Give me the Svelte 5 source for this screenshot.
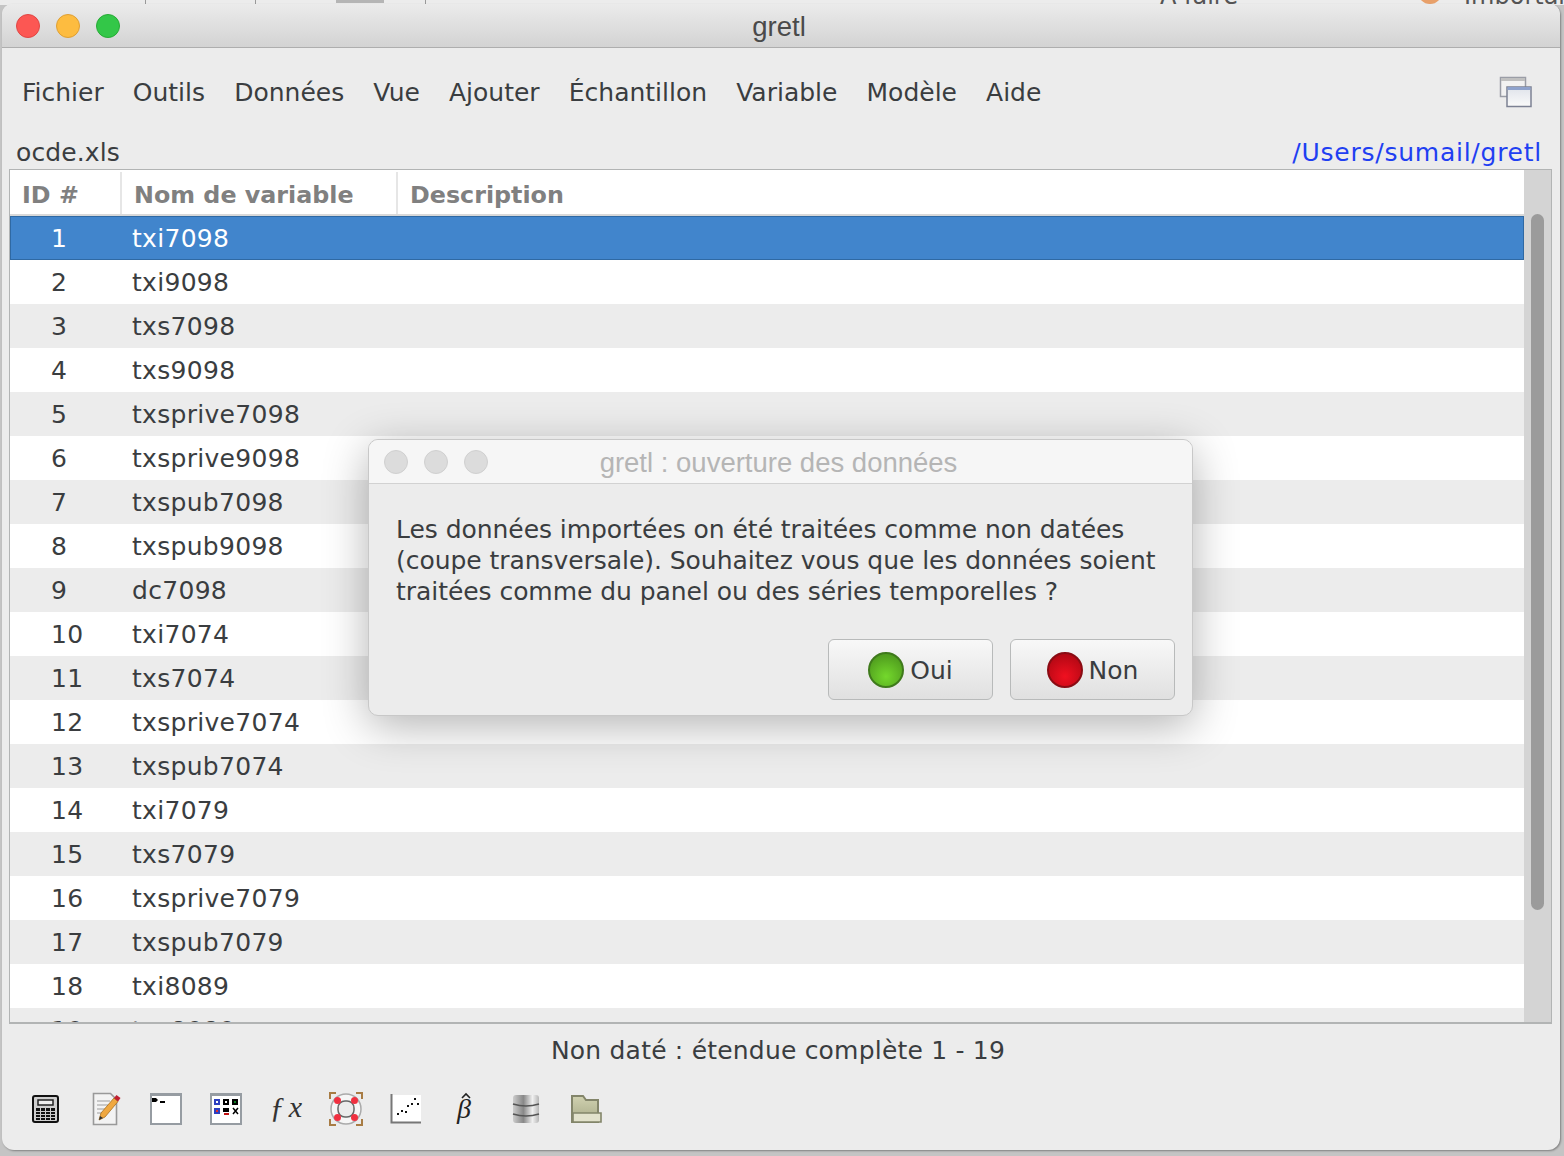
<script lang="ts">
  const menus = ["Fichier", "Outils", "Données", "Vue", "Ajouter", "Échantillon", "Variable", "Modèle", "Aide"];
  const names = [
    "txi7098", "txi9098", "txs7098", "txs9098", "txsprive7098", "txsprive9098", "txspub7098",
    "txspub9098", "dc7098", "txi7074", "txs7074", "txsprive7074", "txspub7074", "txi7079",
    "txs7079", "txsprive7079", "txspub7079", "txi8089", "txs8089"
  ];
</script>

<div class="desk">
  <div class="behind">
    <span class="tick" style="left: 145px"></span>
    <span class="tick" style="left: 255px"></span>
    <span class="tab" style="left: 336px"></span>
    <span class="tick" style="left: 425px"></span>
    <span class="peek" style="left: 1160px">À faire</span>
    <span class="dot" style="left: 1418px"></span>
    <span class="peek" style="left: 1464px">Important</span>
  </div>

  <div class="window">
    <header class="titlebar">
      <div class="lights">
        <span class="light red"></span>
        <span class="light yellow"></span>
        <span class="light green"></span>
      </div>
      <span class="title">gretl</span>
    </header>

    <nav class="menubar">
      {#each menus as m}
        <span>{m}</span>
      {/each}
      <svg class="winicon" width="34" height="32" viewBox="0 0 34 32">
        <defs>
          <linearGradient id="pane" x1="0" y1="0" x2="0" y2="1">
            <stop offset="0" stop-color="#dfe3ea" />
            <stop offset="1" stop-color="#fafafa" />
          </linearGradient>
        </defs>
        <rect x="1.5" y="1.5" width="25" height="19" fill="#f2f2f2" stroke="#9a9da6" stroke-width="1.5" />
        <rect x="2" y="2" width="24" height="3" fill="#c0c0c0" />
        <rect x="8" y="11" width="24" height="19.5" fill="url(#pane)" stroke="#7c8193" stroke-width="1.5" />
        <rect x="8.5" y="11" width="23" height="3" fill="#8ea2cc" />
      </svg>
    </nav>

    <div class="infobar">
      <span class="file">ocde.xls</span>
      <span class="path">/Users/sumail/gretl</span>
    </div>

    <div class="tablebox">
      <div class="table">
        <div class="thead">
          <div class="th c1">ID #</div>
          <div class="th c2">Nom de variable</div>
          <div class="th c3">Description</div>
        </div>
        {#each names as name, i}
          <div class="row" class:alt={i % 2 === 0} class:selected={i === 0}>
            <div class="id">{i + 1}</div>
            <div class="name">{name}</div>
          </div>
        {/each}
      </div>
      <div class="scrollbar"><div class="thumb"></div></div>
    </div>

    <div class="status">Non daté : étendue complète 1 - 19</div>

    <div class="toolbar">
      <span class="tool">
        <svg width="32" height="30" viewBox="0 0 32 30">
          <rect x="3" y="2" width="25" height="26" rx="2" fill="#cfcfcf" stroke="#111" stroke-width="2" />
          <rect x="8" y="6" width="15" height="5" fill="#eee" stroke="#222" stroke-width="1.5" />
          <g fill="#111">
            {#each [6, 11, 16, 21] as x}
              <rect {x} y="14" width="4" height="12" />
            {/each}
          </g>
          <path d="M5 17.500h22M5 20.500h22M5 23.500h22" stroke="#ccc" stroke-width="1" />
        </svg>
      </span>
      <span class="tool">
        <svg width="32" height="34" viewBox="0 0 32 34">
          <path d="M3.500 1.500h17l6 6v25h-23z" fill="#f3f3f3" stroke="#999" stroke-width="1.6" />
          <path d="M7 9h13M7 13h11M7 17h9M7 21h7" stroke="#bbb" stroke-width="1.6" />
          <path d="M9 28l2-7L24 6l4 3.500L15 25z" fill="#f0a840" stroke="#a87020" stroke-width="0.8" />
          <path d="M9 28l1-4 3 2z" fill="#333" />
          <path d="M24 6l2.500-3 4 3-2.500 3.500z" fill="#c02030" />
        </svg>
      </span>
      <span class="tool">
        <svg width="32" height="32" viewBox="0 0 32 32">
          <rect x="1" y="1" width="30" height="30" fill="#fff" stroke="#969ca2" stroke-width="2" />
          <rect x="0" y="0" width="32" height="3" fill="#969ca2" />
          <path d="M2 5h4l2 2-2 2H2zM10 8h5v2h-5z" fill="#000" />
        </svg>
      </span>
      <span class="tool">
        <svg width="32" height="32" viewBox="0 0 32 32">
          <rect x="1" y="1" width="30" height="30" fill="#fff" stroke="#969ca2" stroke-width="2" />
          <rect x="0" y="0" width="32" height="3" fill="#969ca2" />
          <rect x="5" y="7" width="4" height="4" fill="#fff" stroke="#2c3fc0" stroke-width="2" />
          <rect x="14" y="7" width="4" height="4" fill="#fff" stroke="#000" stroke-width="2" />
          <rect x="23" y="7" width="4" height="4" fill="#0b7a20" stroke="#000" stroke-width="2" />
          <rect x="4" y="15" width="6" height="6" fill="#2c3fc0" />
          <rect x="6" y="17" width="2" height="2" fill="#e03030" />
          <path d="M13 15h6v4h-6z" fill="#000" />
          <path d="M14 20h5v2h-5z" fill="#c01010" />
          <path d="M23 15l5 6M28 15l-5 6" stroke="#000" stroke-width="1.500" />
        </svg>
      </span>
      <span class="tool fx"><i>ƒ</i> <i>x</i></span>
      <span class="tool">
        <svg width="34" height="34" viewBox="0 0 34 34">
          <path d="M1 7V1h6M27 1h6v6M33 27v6h-6M7 33H1v-6" fill="none" stroke="#a87c44" stroke-width="2" />
          <circle cx="17" cy="17" r="15" fill="#f6f6f6" stroke="#aaa" stroke-width="1.500" />
          <rect x="9" y="9" width="16" height="16" rx="7" fill="#ececec" stroke="#666" stroke-width="1.500" />
          <g fill="#f03040">
            <circle cx="8.500" cy="8.500" r="3.500" />
            <circle cx="25.500" cy="8.500" r="3.500" />
            <circle cx="8.500" cy="25.500" r="3.500" />
            <circle cx="25.500" cy="25.500" r="3.500" />
          </g>
        </svg>
      </span>
      <span class="tool">
        <svg width="32" height="30" viewBox="0 0 32 30">
          <rect x="1" y="1" width="30" height="28" fill="#fff" />
          <path d="M1.500 0v28.500H31" fill="none" stroke="#777" stroke-width="2" />
          <g fill="#111">
            <rect x="7" y="19" width="2" height="2" /><rect x="11" y="16" width="2" height="2" />
            <rect x="15" y="17" width="2" height="2" /><rect x="17" y="11" width="2" height="2" />
            <rect x="21" y="9" width="2" height="2" /><rect x="24" y="4" width="2" height="2" />
            <rect x="27" y="9" width="2" height="2" />
          </g>
        </svg>
      </span>
      <span class="tool beta">
        <svg class="hat" width="10" height="7" viewBox="0 0 10 7">
          <path d="M1 6l4-4 4 4" fill="none" stroke="#222" stroke-width="1.600" />
        </svg>
        β
      </span>
      <span class="tool">
        <svg width="28" height="30" viewBox="0 0 28 30">
          <defs>
            <linearGradient id="can" x1="0" y1="0" x2="1" y2="0">
              <stop offset="0" stop-color="#ccc" />
              <stop offset="0.400" stop-color="#888" />
              <stop offset="0.750" stop-color="#f0f0f0" />
              <stop offset="1" stop-color="#b5b5b5" />
            </linearGradient>
          </defs>
          <rect x="1" y="1" width="26" height="28" rx="3" fill="url(#can)" />
          <path d="M1 10q13 4 26 0M1 20q13 4 26 0" stroke="#555" stroke-width="1.600" fill="none" />
        </svg>
      </span>
      <span class="tool">
        <svg width="32" height="30" viewBox="0 0 32 30">
          <defs>
            <linearGradient id="folder" x1="0" y1="0" x2="0" y2="1">
              <stop offset="0" stop-color="#d0d1b0" />
              <stop offset="1" stop-color="#a8aa88" />
            </linearGradient>
          </defs>
          <path d="M2 2h11l3 4h12v22H2z" fill="url(#folder)" stroke="#83856a" stroke-width="2" />
          <path d="M3 28V19h28v9z" fill="#e2e2cc" stroke="#83856a" stroke-width="1.600" />
        </svg>
      </span>
    </div>

    <div class="dialog">
      <div class="dlg-title">
        <div class="lights">
          <span class="light off"></span>
          <span class="light off"></span>
          <span class="light off"></span>
        </div>
        <span class="title">gretl : ouverture des données</span>
      </div>
      <div class="dlg-body">
        <p>Les données importées on été traitées comme non datées<br />(coupe transversale). Souhaitez vous que les données soient<br />traitées comme du panel ou des séries temporelles ?</p>
        <div class="buttons">
          <button><span class="orb go"></span><span class="label">Oui</span></button>
          <button><span class="orb stop"></span><span class="label">Non</span></button>
        </div>
      </div>
    </div>
  </div>
</div>

<style>
  :global(body) {
    background: #c4c4c4;
  }

  .desk {
    position: relative;
    height: 1156px;
    overflow: hidden;
    padding: 4px 4px 0 2px;
    box-sizing: border-box;
    font-family: "DejaVu Sans", sans-serif;
    color: #3a3d40;
  }

  .behind {
    position: absolute;
    inset: 0 0 auto 0;
    height: 5px;
    background: #ececec;
  }

  .tick {
    position: absolute;
    top: 0;
    width: 1px;
    height: 4px;
    background: #999;
  }

  .tab {
    position: absolute;
    top: 0;
    width: 48px;
    height: 3px;
    background: #b5b5b5;
  }

  .dot {
    position: absolute;
    top: -20px;
    width: 24px;
    height: 24px;
    border-radius: 50%;
    background: #e8a06a;
  }

  .peek {
    position: absolute;
    top: -18px;
    font-size: 24px;
    line-height: 28px;
    color: #555;
  }

  .window {
    position: relative;
    height: 1146px;
    background: #ececec;
    border-radius: 10px 10px 12px 12px;
    box-shadow: 1px 1px 2px rgba(0, 0, 0, 0.35);
    overflow: hidden;
    display: flex;
    flex-direction: column;
  }

  .titlebar {
    position: relative;
    flex: none;
    height: 43px;
    border-bottom: 1px solid #aeaeae;
    background: linear-gradient(#ebebeb, #d3d3d3);
    display: flex;
    align-items: center;
    justify-content: center;
  }

  .lights {
    position: absolute;
    left: 14px;
    top: 10px;
    display: flex;
    gap: 16px;
  }

  .light {
    width: 24px;
    height: 24px;
    border-radius: 50%;
    box-sizing: border-box;
  }

  .red {
    background: #fc5753;
    border: 1px solid #df4744;
  }

  .yellow {
    background: #fdbc40;
    border: 1px solid #de9f34;
  }

  .green {
    background: #33c748;
    border: 1px solid #27aa35;
  }

  .off {
    background: #dcdcdc;
    border: 1px solid #d0d0d0;
  }

  .title {
    font-family: "Liberation Sans", sans-serif;
    font-size: 27.500px;
    color: #4a4a4a;
    position: relative;
    left: -2px;
    top: 1px;
  }

  .menubar {
    flex: none;
    height: 88px;
    box-sizing: border-box;
    padding: 0 27px 0 20px;
    display: flex;
    align-items: center;
    gap: 29.100px;
    font-size: 25px;
  }

  .winicon {
    margin-left: auto;
  }

  .infobar {
    flex: none;
    height: 33px;
    padding: 0 18px 0 14px;
    display: flex;
    justify-content: space-between;
    align-items: flex-end;
    font-size: 25px;
    line-height: 33px;
  }

  .file {
    letter-spacing: 0.1px;
  }

  .path {
    color: #1f3ff2;
    letter-spacing: 0.75px;
  }

  .tablebox {
    flex: none;
    margin: 0 8px 0 7px;
    height: 855px;
    box-sizing: border-box;
    border: 1px solid #b2b4b4;
    border-bottom-width: 2px;
    display: flex;
    overflow: hidden;
  }

  .table {
    flex: 1;
    min-width: 0;
    background: #fff;
    font-size: 25px;
    letter-spacing: 0.3px;
  }

  .thead {
    height: 44px;
    margin-top: 2px;
    box-sizing: border-box;
    display: flex;
    border-bottom: 2px solid #d9d9d9;
    font-size: 23.800px;
    font-weight: bold;
    letter-spacing: 0;
    color: #808080;
  }

  .th {
    line-height: 46px;
    box-sizing: border-box;
    padding-left: 12px;
    border-right: 2px solid #e6e6e6;
  }

  .c1 {
    width: 112px;
  }

  .c2 {
    width: 276px;
  }

  .c3 {
    border-right: none;
  }

  .row {
    height: 44px;
    display: flex;
    line-height: 46px;
    overflow: hidden;
  }

  .alt {
    background: #ececec;
  }

  .selected {
    background: #4185cc;
    color: #fff;
    box-shadow: inset 0 0 0 1px #2f69a3;
  }

  .id {
    width: 122px;
    padding-left: 41px;
    box-sizing: border-box;
  }

  .scrollbar {
    flex: none;
    width: 27px;
    background: #d4d4d4;
    padding: 44px 7px 0 7px;
    box-sizing: border-box;
  }

  .thumb {
    height: 696px;
    border-radius: 7px;
    background: #9b9b9b;
  }

  .status {
    flex: none;
    height: 55px;
    line-height: 53px;
    text-align: center;
    font-size: 25px;
    letter-spacing: 0.2px;
    padding-right: 6px;
  }

  .toolbar {
    flex: none;
    display: flex;
    align-items: center;
    padding-left: 14px;
    height: 60px;
  }

  .tool {
    width: 60px;
    display: flex;
    justify-content: center;
    align-items: center;
  }

  .fx {
    font-family: "Liberation Serif", serif;
    font-size: 30px;
    color: #333;
    gap: 4px;
    position: relative;
    top: -2px;
  }

  .beta {
    font-family: "Liberation Serif", serif;
    font-style: italic;
    font-size: 28px;
    line-height: 30px;
    color: #222;
    position: relative;
    left: -2px;
  }

  .hat {
    position: absolute;
    left: 27px;
    top: -2px;
  }

  .dialog {
    position: absolute;
    left: 366px;
    top: 435px;
    width: 825px;
    height: 277px;
    box-sizing: border-box;
    border: 1px solid #c8c8c8;
    border-radius: 10px;
    overflow: hidden;
    background: #ececec;
    box-shadow: 0 10px 45px rgba(0, 0, 0, 0.3);
  }

  .dlg-title {
    position: relative;
    height: 44px;
    box-sizing: border-box;
    background: #f6f6f6;
    border-bottom: 1px solid #d2d2d2;
    display: flex;
    justify-content: center;
    align-items: center;
  }

  .dlg-title .lights {
    left: 15px;
    top: 10px;
  }

  .dlg-title .title {
    color: #b5b5b5;
    left: -2px;
  }

  .dlg-body {
    padding: 30px 17px 0 27px;
  }

  p {
    margin: 0;
    font-size: 25px;
    line-height: 31px;
    letter-spacing: -0.05px;
  }

  .buttons {
    margin-top: 32px;
    display: flex;
    justify-content: flex-end;
    gap: 17px;
  }

  button {
    width: 165px;
    height: 61px;
    box-sizing: border-box;
    border: 1.500px solid #b8baba;
    border-radius: 6px;
    background: linear-gradient(#f8f8f8, #e0e0e0);
    font: inherit;
    font-size: 25px;
    color: #3a3d40;
    display: flex;
    align-items: center;
    justify-content: center;
    gap: 6px;
    padding: 0;
  }

  .label {
    position: relative;
    top: 1px;
  }

  .orb {
    width: 36px;
    height: 36px;
    border-radius: 50%;
    box-sizing: border-box;
  }

  .go {
    background: radial-gradient(circle at 50% 70%, #74d82c, #4f9c1e 80%);
    border: 2px solid #3f7a1c;
  }

  .stop {
    background: radial-gradient(circle at 50% 70%, #f01020, #b40814 80%);
    border: 2px solid #8a0c14;
  }
</style>
